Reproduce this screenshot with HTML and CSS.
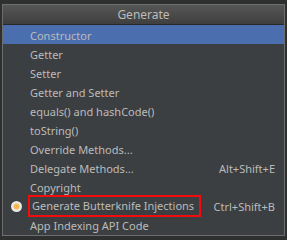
FILE: index.html
```html
<!DOCTYPE html>
<html>

<head>
    <meta charset="UTF-8">
    <link rel="stylesheet" href="styles.css">
    <title>Generate</title>
</head>

<body>
    <div class="popup">
        <div class="popup-title">Generate</div>
        <ul class="menu">
            <li class="item selected"><span class="label">Constructor</span></li>
            <li class="item"><span class="label">Getter</span></li>
            <li class="item"><span class="label">Setter</span></li>
            <li class="item"><span class="label">Getter and Setter</span></li>
            <li class="item"><span class="label">equals() and hashCode()</span></li>
            <li class="item"><span class="label">toString()</span></li>
            <li class="item"><span class="label">Override Methods...</span></li>
            <li class="item"><span class="label">Delegate Methods...</span><span class="shortcut">Alt+Shift+E</span></li>
            <li class="item"><span class="label">Copyright</span></li>
            <li class="item">
                <span class="icon"></span>
                <span class="label marked">Generate Butterknife Injections</span>
                <span class="shortcut">Ctrl+Shift+B</span>
            </li>
            <li class="item"><span class="label">App Indexing API Code</span></li>
        </ul>
    </div>
</body>

</html>
```
FILE: styles.css
```css
*,
*::before,
*::after {
    box-sizing: border-box;
    padding: 0;
    margin: 0;
}

body {
    height: 240px;
    overflow: hidden;
    background: #2d302e;
    font-family: "Noto Sans", "DejaVu Sans", sans-serif;
    font-size: 11px;
    color: #bbbbbb;
    padding: 4px 3px 0 2px;
}

.popup {
    width: 283px;
    border: 1px solid #6e6e6e;
    background: #3c3f41;
    padding-bottom: 1px;
}

.popup-title {
    height: 20px;
    line-height: 19px;
    font-size: 12px;
    text-align: center;
    background: linear-gradient(#565656, #3f3f3f);
    border-bottom: 1px solid #282828;
}

.menu {
    list-style: none;
}

.item {
    position: relative;
    display: flex;
    align-items: center;
    height: 19px;
    padding: 1px 9px 0 26px;
}

.item.selected {
    background: #4b6eaf;
}

.label {
    flex: 1;
    white-space: nowrap;
    padding-left: 1px;
}

.label.marked {
    flex: none;
    margin-left: -1px;
    margin-right: 6px;
    padding: 1px 5px 2px 2px;
    border: 2px solid #f40c0c;
}

.shortcut {
    margin-left: auto;
    white-space: nowrap;
}

.icon {
    position: absolute;
    left: 8px;
    top: 5px;
    width: 11px;
    height: 11px;
    border-radius: 50%;
    background: radial-gradient(circle, #f2b23f 0, #f5c060 35%, #ececec 45%, #d8d8d8 100%);
}
```
